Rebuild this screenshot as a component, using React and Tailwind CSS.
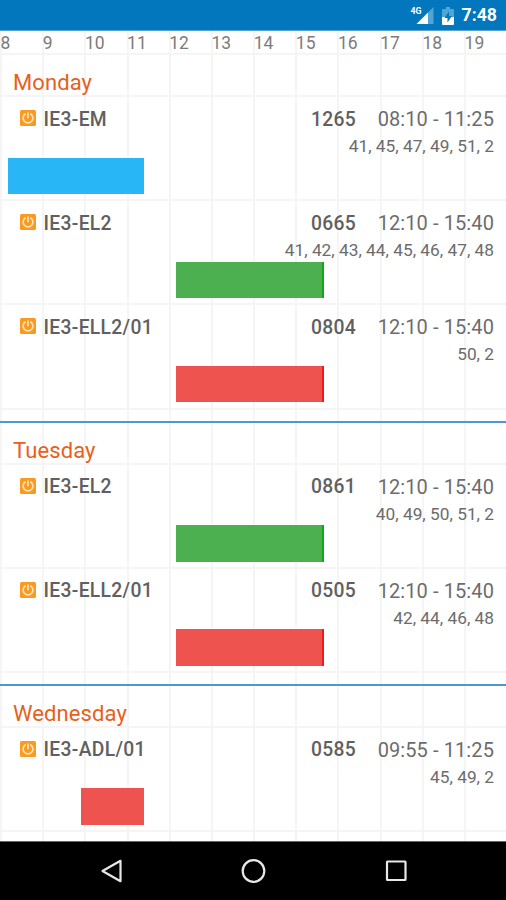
import React from 'react';

const HOUR_WIDTH = 42.17;

const hours = [8, 9, 10, 11, 12, 13, 14, 15, 16, 17, 18, 19];

const days = [
  {
    name: 'Monday',
    lessons: [
      { title: 'IE3-EM', room: '1265', time: '08:10 - 11:25', weeks: '41, 45, 47, 49, 51, 2', start: 8.167, end: 11.4, color: 'bg-[#29b6f6]' },
      { title: 'IE3-EL2', room: '0665', time: '12:10 - 15:40', weeks: '41, 42, 43, 44, 45, 46, 47, 48', start: 12.167, end: 15.667, color: 'bg-[#4caf50]', edge: 'bg-[#0fa915]' },
      { title: 'IE3-ELL2/01', room: '0804', time: '12:10 - 15:40', weeks: '50, 2', start: 12.167, end: 15.667, color: 'bg-[#ef5350]', edge: 'bg-[#ea1c18]' },
    ],
  },
  {
    name: 'Tuesday',
    lessons: [
      { title: 'IE3-EL2', room: '0861', time: '12:10 - 15:40', weeks: '40, 49, 50, 51, 2', start: 12.167, end: 15.667, color: 'bg-[#4caf50]', edge: 'bg-[#0fa915]' },
      { title: 'IE3-ELL2/01', room: '0505', time: '12:10 - 15:40', weeks: '42, 44, 46, 48', start: 12.167, end: 15.667, color: 'bg-[#ef5350]', edge: 'bg-[#ea1c18]' },
    ],
  },
  {
    name: 'Wednesday',
    lessons: [
      { title: 'IE3-ADL/01', room: '0585', time: '09:55 - 11:25', weeks: '45, 49, 2', start: 9.917, end: 11.4, color: 'bg-[#ef5350]' },
    ],
  },
];

const StatusBar = () => (
  <div className="h-[31px] shrink-0 bg-[#0277bd] border-b border-[#5ba3d0] flex items-center justify-end pr-[9px] pt-px text-white">
    {/* Signal */}
    <svg className="w-6 h-[22px] mr-[8px]" viewBox="0 0 24 22">
      <path d="M23.500 2v17H18V7.500z" fill="#4fa6d3" />
      <path d="M18 7.500V19H6.500z" fill="#fff" />
      <text x="0.500" y="9" fontSize="9" fontWeight="700" fill="#fff" textLength="11" lengthAdjust="spacingAndGlyphs" fontFamily="Roboto, sans-serif">4G</text>
    </svg>
    {/* Battery */}
    <svg className="w-3 h-[18px] mr-[8px]" viewBox="0 0 12 18">
      <path d="M4 0h4v2h3q1 0 1 1v7H0V3q0-1 1-1h3z" fill="#4fa6d3" />
      <path d="M0 10h12v7q0 1-1 1H1q-1 0-1-1z" fill="#fff" />
      <path d="M7 4.500L2.500 11h3v4.500L10 9H7z" fill="#0277bd" />
    </svg>
    <span className="text-[17.700px] leading-none font-bold">7:48</span>
  </div>
);

const TimerIcon = () => (
  <svg className="w-4 h-4 shrink-0 -mt-[2px]" viewBox="0 0 16 16" fill="none">
    <rect width="16" height="16" rx="1.500" fill="#fb9a20" />
    <path d="M5.200 4a4.900 4.900 0 1 0 5.600 0" stroke="#ffe3b8" strokeWidth="1.700" strokeLinecap="round" />
    <path d="M8 3v4.500" stroke="#ffe3b8" strokeWidth="1.700" strokeLinecap="round" />
  </svg>
);

const Lesson = ({ lesson }) => (
  <div className="h-[104.200px] pt-[10px] border-b-2 border-[#f5f5f5] text-[#6c6c6c]">
    <div className="flex items-center h-[24px] pl-5 pr-3">
      <TimerIcon />
      <span className="ml-[7.500px] pt-[2px] text-[19.300px] tracking-[0.320px] font-medium text-[#606060]">{lesson.title}</span>
      <span className="ml-auto pt-[2px] text-[19.300px] tracking-[0.300px] font-medium text-[#606060]">{lesson.room}</span>
      <span className="ml-[21.500px] text-[20px] tracking-[0.1px]">{lesson.time}</span>
    </div>
    <div className="h-[26.500px] pr-3 pt-[3px] text-right text-[17.300px] leading-[24px]">{lesson.weeks}</div>
    <div
      className={`flex justify-end h-[36.500px] ${lesson.color}`}
      style={{
        marginLeft: (lesson.start - 8) * HOUR_WIDTH + 0.5,
        width: (lesson.end - lesson.start) * HOUR_WIDTH,
      }}
    >
      {lesson.edge && <div className={`w-[1.500px] ${lesson.edge}`} />}
    </div>
  </div>
);

const Day = ({ day }) => (
  <section className="pb-[11px] border-b-2 border-[#4f97d0] last:border-b-0 last:pb-0">
    <h2 className="h-[42px] pl-[13px] pt-[14px] border-b-2 border-[#f5f5f5] text-[22px] leading-[28px] tracking-[0.1px] text-[#e8601c]">{day.name}</h2>
    {day.lessons.map((lesson) => (
      <Lesson key={lesson.title} lesson={lesson} />
    ))}
  </section>
);

const NavBar = () => (
  <div className="h-[59px] shrink-0 bg-black border-t border-[#666]">
    <svg className="w-full h-[58px]" viewBox="0 0 506 58" fill="none" stroke="#e8e8e8" strokeWidth="2.200" strokeLinejoin="round">
      <path d="M102.500 29L120.500 18.800V39.200z" />
      <circle cx="253.500" cy="29" r="10.800" />
      <rect x="387" y="19.500" width="18.500" height="18.500" rx="0.500" />
    </svg>
  </div>
);

export default function App() {
  return (
    <div className="w-[506px] h-[900px] overflow-hidden flex flex-col bg-white font-['Roboto',sans-serif]">
      <StatusBar />
      <div className="h-[810px] overflow-hidden bg-[repeating-linear-gradient(to_right,#f5f5f5_0px,#f5f5f5_2px,transparent_2px,transparent_42.17px)]">
        <div className="flex h-[24px] pt-px pl-[0.500px] border-b-2 border-[#f5f5f5] text-[17.500px] leading-[23px] text-[#7c7c7c]">
          {hours.map((hour) => (
            <span key={hour} className="w-[42.200px] shrink-0">{hour}</span>
          ))}
        </div>
        {days.map((day) => (
          <Day key={day.name} day={day} />
        ))}
      </div>
      <NavBar />
    </div>
  );
}
